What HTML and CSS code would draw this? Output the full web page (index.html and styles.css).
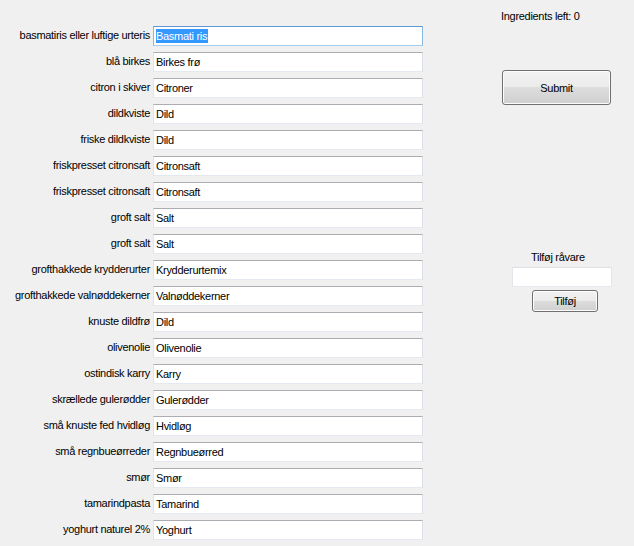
FILE: index.html
```html
<!DOCTYPE html>
<html>
<head>
<meta charset="utf-8">
<link rel="stylesheet" href="styles.css">
</head>
<body>
<div class="window">
  <div class="form">
    <div class="row"><span class="lbl">basmatiris eller luftige urteris</span><div class="tb focus"><span class="sel">Basmati ris</span></div></div>
    <div class="row"><span class="lbl">blå birkes</span><div class="tb">Birkes frø</div></div>
    <div class="row"><span class="lbl">citron i skiver</span><div class="tb">Citroner</div></div>
    <div class="row"><span class="lbl">dildkviste</span><div class="tb">Dild</div></div>
    <div class="row"><span class="lbl">friske dildkviste</span><div class="tb">Dild</div></div>
    <div class="row"><span class="lbl">friskpresset citronsaft</span><div class="tb">Citronsaft</div></div>
    <div class="row"><span class="lbl">friskpresset citronsaft</span><div class="tb">Citronsaft</div></div>
    <div class="row"><span class="lbl">groft salt</span><div class="tb">Salt</div></div>
    <div class="row"><span class="lbl">groft salt</span><div class="tb">Salt</div></div>
    <div class="row"><span class="lbl">grofthakkede krydderurter</span><div class="tb">Krydderurtemix</div></div>
    <div class="row"><span class="lbl">grofthakkede valnøddekerner</span><div class="tb">Valnøddekerner</div></div>
    <div class="row"><span class="lbl">knuste dildfrø</span><div class="tb">Dild</div></div>
    <div class="row"><span class="lbl">olivenolie</span><div class="tb">Olivenolie</div></div>
    <div class="row"><span class="lbl">ostindisk karry</span><div class="tb">Karry</div></div>
    <div class="row"><span class="lbl">skrællede gulerødder</span><div class="tb">Gulerødder</div></div>
    <div class="row"><span class="lbl">små knuste fed hvidløg</span><div class="tb">Hvidløg</div></div>
    <div class="row"><span class="lbl">små regnbueørreder</span><div class="tb">Regnbueørred</div></div>
    <div class="row"><span class="lbl">smør</span><div class="tb">Smør</div></div>
    <div class="row"><span class="lbl">tamarindpasta</span><div class="tb">Tamarind</div></div>
    <div class="row"><span class="lbl">yoghurt naturel 2%</span><div class="tb">Yoghurt</div></div>
  </div>
  <div class="side">
    <div class="left-count">Ingredients left: 0</div>
    <div class="btn submit">Submit</div>
    <div class="add-lbl">Tilføj råvare</div>
    <div class="tb add-tb"></div>
    <div class="btn add-btn">Tilføj</div>
  </div>
</div>
</body>
</html>
```
FILE: styles.css
```css
html, body {
  margin: 0;
  padding: 0;
  background: #f0f0f0;
}
body {
  font-family: "Liberation Sans", Arial, sans-serif;
  font-size: 11px;
  letter-spacing: -0.3px;
  color: #000;
}
.window {
  display: flex;
  width: 634px;
  height: 546px;
  overflow: hidden;
}
.form {
  width: 423px;
  padding-top: 26px;
  display: flex;
  flex-direction: column;
  gap: 6px;
}
.row {
  display: flex;
  height: 20px;
}
.lbl {
  width: 150px;
  text-align: right;
  line-height: 16px;
  padding-top: 1px;
  white-space: nowrap;
  margin-right: 3px;
}
.tb {
  box-sizing: border-box;
  width: 270px;
  height: 20px;
  background: #fff;
  border: 1px solid;
  border-color: #abadb3 #dbdfe6 #e3e9ef #e2e3ea;
  padding-left: 2px;
  line-height: 18px;
  white-space: nowrap;
}
.tb.focus {
  border-color: #5c9ad6 #89b8e3 #a7cdee #89b8e3;
}
.sel {
  background: #3399ff;
  color: #fff;
  display: inline-block;
  line-height: 14px;
  padding-right: 1px;
}
.side {
  flex: 1;
  display: flex;
  flex-direction: column;
  align-items: flex-start;
}
.left-count {
  margin-top: 9px;
  margin-left: 78px;
  line-height: 14px;
}
.btn {
  box-sizing: border-box;
  border: 1px solid #707070;
  border-radius: 3px;
  background: linear-gradient(#f2f2f2 0%, #ebebeb 50%, #dddddd 50%, #cfcfcf 100%);
  box-shadow: inset 0 0 0 1px #fcfcfc;
  display: flex;
  align-items: center;
  justify-content: center;
}
.submit {
  margin-top: 47px;
  margin-left: 79px;
  width: 109px;
  height: 35px;
}
.add-lbl {
  margin-top: 145px;
  margin-left: 108px;
  line-height: 14px;
}
.add-tb {
  margin-top: 3px;
  margin-left: 89px;
  width: 100px;
  border-color: #dcdfe4 #e3e6ea #e6e9ee #e3e6ea;
}
.add-btn {
  margin-top: 3px;
  margin-left: 109px;
  width: 66px;
  height: 22px;
}
```
